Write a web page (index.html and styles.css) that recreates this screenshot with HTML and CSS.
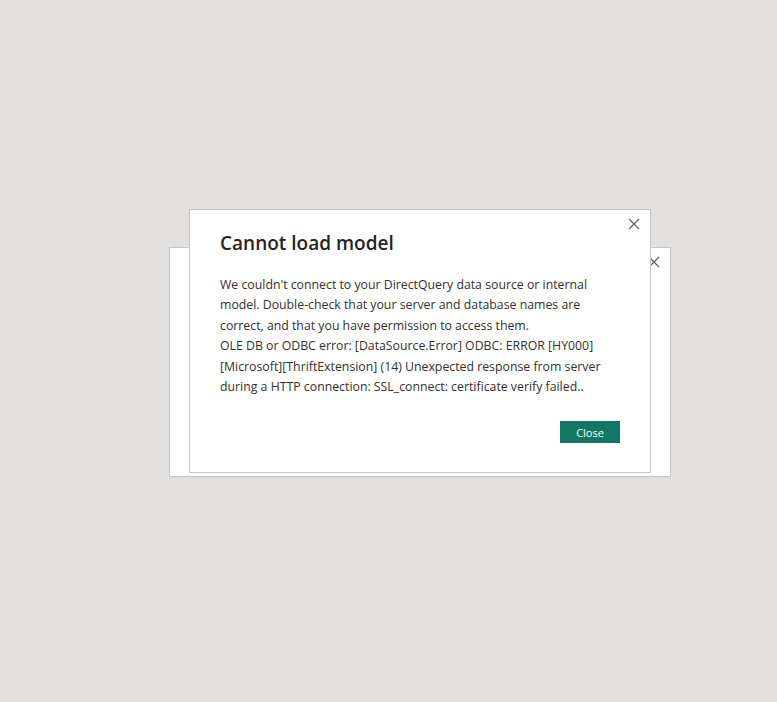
FILE: index.html
```html
<!DOCTYPE html>
<html lang="en">
<head>
    <meta charset="UTF-8">
    <title>Cannot load model</title>
    <link rel="stylesheet" href="styles.css">
</head>
<body>
    <div class="stage">
        <div class="dialog back-dialog">
            <button class="close-x" aria-label="Close">
                <svg width="12" height="12" viewBox="0 0 12 12"><path d="M1 1L11 11M11 1L1 11" stroke="#605e5c" stroke-width="1.2"/></svg>
            </button>
        </div>

        <div class="dialog front-dialog">
            <button class="close-x" aria-label="Close">
                <svg width="12" height="12" viewBox="0 0 12 12"><path d="M1 1L11 11M11 1L1 11" stroke="#605e5c" stroke-width="1.2"/></svg>
            </button>
            <h1>Cannot load model</h1>
            <p class="message">
                We couldn't connect to your DirectQuery data source or internal model. Double-check that your server and database names are correct, and that you have permission to access them.<br>
                OLE DB or ODBC error: [DataSource.Error] ODBC: ERROR [HY000] [Microsoft][ThriftExtension] (14) Unexpected response from server during a HTTP connection: SSL_connect: certificate verify failed..
            </p>
            <div class="actions">
                <button class="primary">Close</button>
            </div>
        </div>
    </div>
</body>
</html>
```

FILE: styles.css
```css
body {
    margin: 0;
    padding: 0;
    background-color: #e1e0df;
    font-family: "Open Sans", Arial, sans-serif;
    color: #323130;
}
.stage {
    position: relative;
    width: 777px;
    height: 702px;
}
.dialog {
    position: absolute;
    background-color: white;
    border: 1px solid #c8c6c4;
    box-sizing: border-box;
}
.back-dialog {
    left: 169px;
    top: 247px;
    width: 502px;
    height: 230px;
}
.front-dialog {
    left: 189px;
    top: 209px;
    width: 462px;
    height: 264px;
    padding: 20px 28px 0 30px;
}
.close-x {
    position: absolute;
    top: 7px;
    right: 9px;
    width: 14px;
    height: 14px;
    padding: 1px;
    border: none;
    background: none;
    cursor: pointer;
}
.back-dialog .close-x {
    top: 7px;
    right: 9px;
}
.close-x svg {
    display: block;
}
h1 {
    margin: 0 0 19px 0;
    font-size: 19px;
    font-weight: 600;
    line-height: 26px;
    color: #252423;
}
.message {
    margin: 0;
    font-size: 12.3px;
    line-height: 20.4px;
    color: #323130;
}
.actions {
    display: flex;
    justify-content: flex-end;
    margin-top: 24px;
    padding-right: 2px;
}
.primary {
    background-color: #117865;
    color: white;
    border: none;
    width: 60px;
    height: 22px;
    font-family: "Open Sans", Arial, sans-serif;
    font-size: 11px;
    padding: 0;
    cursor: pointer;
}
```
